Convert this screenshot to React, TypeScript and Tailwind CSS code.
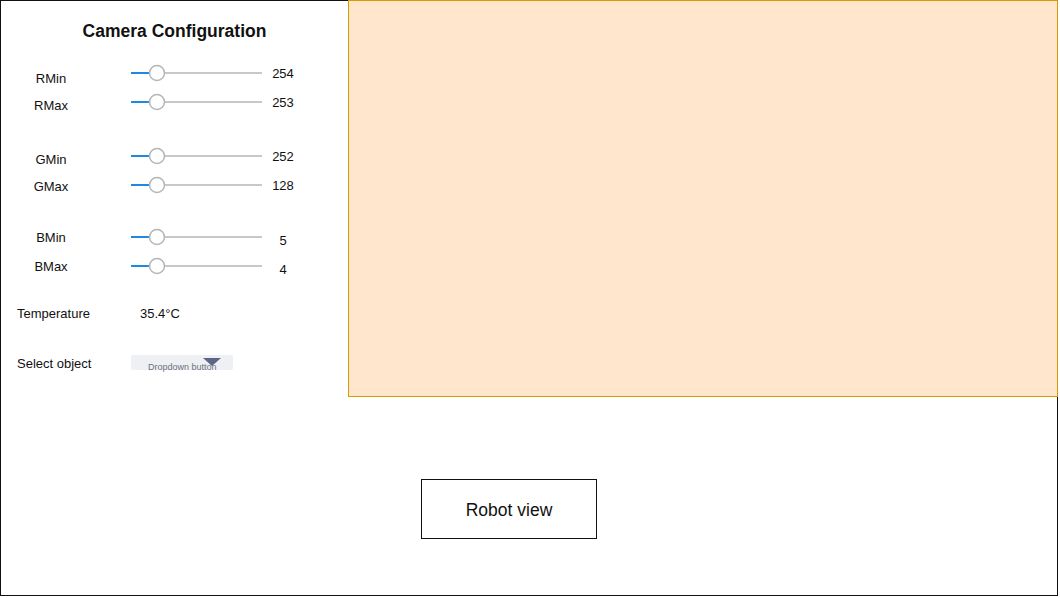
import React from "react";

function Slider() {
  return (
    <svg width="131" height="20" viewBox="0 0 131 20" className="block shrink-0">
      <line x1="0" y1="10" x2="131" y2="10" stroke="#c8c8c8" strokeWidth="2" />
      <line x1="0" y1="10" x2="19" y2="10" stroke="#1e88e5" strokeWidth="2" />
      <circle cx="26" cy="10" r="7.5" fill="#ffffff" stroke="#b5b5b5" strokeWidth="1.5" />
    </svg>
  );
}

type RowProps = {
  label: string;
  value: string;
  rowClass: string;
  labelClass: string;
  valueClass: string;
};

function Row({ label, value, rowClass, labelClass, valueClass }: RowProps) {
  return (
    <div className={`flex items-start h-[20px] ${rowClass}`}>
      <div className={`w-[100px] text-center text-[13px] leading-[16px] ${labelClass}`}>{label}</div>
      <div className="ml-[30px]">
        <Slider />
      </div>
      <div className={`ml-[6px] w-[30px] text-center text-[13px] leading-[16px] ${valueClass}`}>{value}</div>
    </div>
  );
}

export default function App() {
  return (
    <div
      className="w-[1058px] h-[596px] border border-[#111] bg-white text-[#111] flex flex-col"
      style={{ fontFamily: '"Liberation Sans", Arial, sans-serif' }}
    >
      <div className="flex">
        <div className="w-[347px] pt-[20px] flex flex-col">
          <div className="text-center text-[17.5px] leading-[20px] font-bold">Camera Configuration</div>
          <Row label="RMin" value="254" rowClass="mt-[22px]" labelClass="mt-[8px]" valueClass="mt-[3px]" />
          <Row label="RMax" value="253" rowClass="mt-[9px]" labelClass="mt-[6px]" valueClass="mt-[3px]" />
          <Row label="GMin" value="252" rowClass="mt-[34px]" labelClass="mt-[6px]" valueClass="mt-[3px]" />
          <Row label="GMax" value="128" rowClass="mt-[9px]" labelClass="mt-[4px]" valueClass="mt-[3px]" />
          <Row label="BMin" value="5" rowClass="mt-[32px]" labelClass="mt-[3px]" valueClass="mt-[6px]" />
          <Row label="BMax" value="4" rowClass="mt-[9px]" labelClass="mt-[3px]" valueClass="mt-[6px]" />
          <div className="mt-[30px] flex pl-4 text-[13px] leading-[16px]">
            <div className="w-[123px]">Temperature</div>
            <div>35.4°C</div>
          </div>
          <div className="mt-[33px] flex items-start pl-4 text-[13px] leading-[16px]">
            <div className="w-[114px] mt-[1px]">Select object</div>
            <div className="relative w-[102px] h-[15px] bg-[#eff0f4] rounded-[2px]">
              <span className="absolute left-[17px] top-[7px] text-[9px] leading-[11px] text-[#6b7280] whitespace-nowrap">
                Dropdown button
              </span>
              <svg
                className="absolute left-[72px] top-[3px]"
                width="18"
                height="8"
                viewBox="0 0 18 8"
              >
                <polygon points="0,0 18,0 9,8" fill="#5b6585" />
              </svg>
            </div>
          </div>
        </div>
        <div className="flex-1 h-[397px] -mt-px -mr-px border border-[#d79b00] bg-[#ffe6cc]" />
      </div>
      <div className="mt-[82px] ml-[420px] w-[176px] h-[60px] pt-[2px] border border-[#111] flex items-center justify-center text-[17.5px]">
        Robot view
      </div>
    </div>
  );
}
